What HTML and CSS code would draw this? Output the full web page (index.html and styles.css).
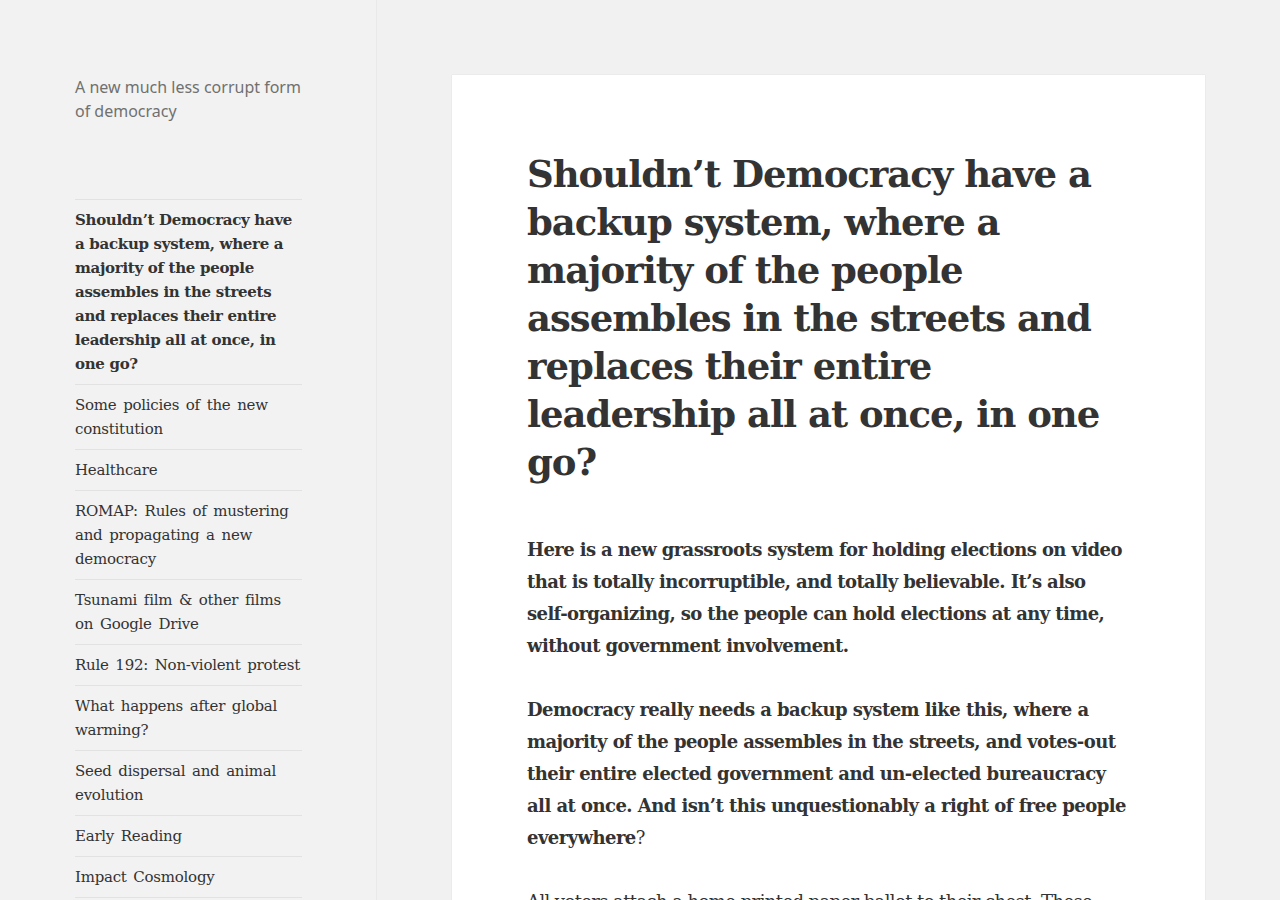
FILE: index.html
```html
<!DOCTYPE html>
<html lang="en">
<head>
  <meta charset="UTF-8">
  <title>Shouldn’t Democracy have a backup system</title>
  <link rel="stylesheet" href="styles.css">
</head>
<body>
  <div class="page">
    <aside class="sidebar">
      <p class="site-description">A new much less corrupt form of democracy</p>

      <ul class="post-list">
        <li class="current"><a href="#">Shouldn’t Democracy have a backup system, where a majority of the people assembles in the streets and replaces their entire leadership all at once, in one go?</a></li>
        <li><a href="#">Some policies of the new constitution</a></li>
        <li><a href="#">Healthcare</a></li>
        <li><a href="#">ROMAP: Rules of mustering and propagating a new democracy</a></li>
        <li><a href="#">Tsunami film &amp; other films on Google Drive</a></li>
        <li><a href="#">Rule 192: Non-violent protest</a></li>
        <li><a href="#">What happens after global warming?</a></li>
        <li><a href="#">Seed dispersal and animal evolution</a></li>
        <li><a href="#">Early Reading</a></li>
        <li><a href="#">Impact Cosmology</a></li>
      </ul>
    </aside>

    <main class="content">
      <article class="post">
        <h1 class="entry-title">Shouldn’t Democracy have a backup system, where a majority of the people assembles in the streets and replaces their entire leadership all at once, in one go?</h1>

        <div class="entry-content">
          <p><strong>Here is a new grassroots system for holding elections on video that is totally incorruptible, and totally believable. It’s also self-organizing, so the people can hold elections at any time, without government involvement.</strong></p>
          <p><strong class="narrow">Democracy really needs a backup system like this, where a majority of the people assembles in the streets, and votes-out their entire elected government and un-elected bureaucracy all at once. And isn’t this unquestionably a right of free people everywhere</strong>?</p>
          <p>All voters attach a home-printed paper ballot to their chest. These ballots are then read by video cameras as the voters walk past, and counted by anyone who wants to watch the footage.</p>
        </div>
      </article>
    </main>
  </div>
</body>
</html>
```

FILE: styles.css
```css
body {
  margin: 0;
  background-color: #f1f1f1;
  color: #333;
  font-family: "DejaVu Serif", serif;
}
a {
  color: #333;
  text-decoration: none;
}
.page {
  display: flex;
  align-items: flex-start;
  min-height: 900px;
}
.sidebar {
  flex: 0 0 376px;
  box-sizing: border-box;
  min-height: 900px;
  padding: 75px 74px 0 75px;
  background-color: #f2f2f2;
  box-shadow: 1px 0 0 #e9e9e9;
}
.site-description {
  margin: 0 0 76px;
  font-family: "Noto Sans", sans-serif;
  font-size: 16px;
  line-height: 24px;
  color: #707070;
}
.post-list {
  list-style: none;
  margin: 0;
  padding: 0;
  border-bottom: 1px solid #e2e2e2;
  font-size: 15px;
  line-height: 24px;
  letter-spacing: -0.25px;
  word-spacing: 2.2px;
}
.post-list li {
  padding: 8px 0;
  border-top: 1px solid #e2e2e2;
}
.post-list .current {
  font-weight: bold;
  letter-spacing: -0.3px;
  word-spacing: 0;
}
.content {
  flex: 1;
  padding: 75px 75px 0 76px;
}
.post {
  background: #fff;
  box-shadow: 0 0 1px rgba(0, 0, 0, 0.15);
  padding: 75px 75px 0;
  min-height: 900px;
}
.entry-title {
  margin: 0 0 48px;
  font-size: 37px;
  line-height: 48px;
  letter-spacing: -1px;
}
.entry-content p {
  margin: 0 0 32px;
  font-size: 18px;
  line-height: 32px;
  letter-spacing: -0.6px;
}
.entry-content .narrow {
  letter-spacing: -0.55px;
}
```
